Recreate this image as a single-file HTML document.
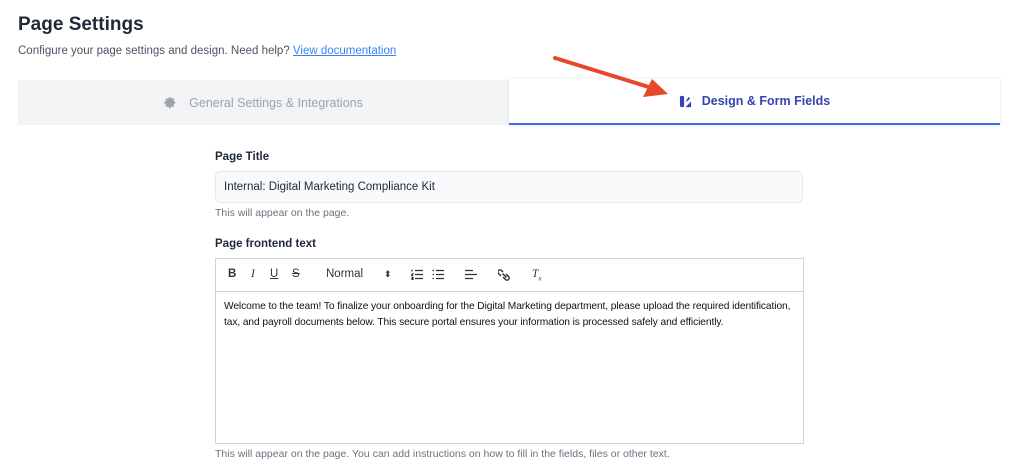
<!DOCTYPE html>
<html><head><style>
body{margin:0;width:1024px;height:472px;background:#fff;font-family:"Liberation Sans",sans-serif;position:relative;overflow:hidden;color:#111827}
.a{position:absolute}
h1{position:absolute;left:18px;top:14px;margin:0;font-size:19px;font-weight:700;color:#1f2937}
.sub{left:18px;top:45px;font-size:11.5px;color:#4b5563}
.sub a{color:#3b82f6;text-decoration:underline}
.tab1{left:18px;top:80px;width:491px;height:45px;background:#f3f4f6;color:#9ca3af;font-size:12.5px;display:flex;align-items:center;justify-content:center}
.tab2{left:509px;top:79px;width:491px;height:44px;background:#fff;box-shadow:0 0 3px rgba(0,0,0,.12);border-bottom:2px solid #4169e1;color:#3545b0;font-size:12.5px;font-weight:700;display:flex;align-items:center;justify-content:center}
.lbl{left:215px;font-size:11.5px;font-weight:700;color:#1f2937}
.help{left:215px;font-size:10.5px;color:#6b7280}
.inp{left:215px;top:171px;width:586px;height:30px;border:1px solid #e5e7eb;border-radius:5px;background:#f9fafb;font-size:11.5px;line-height:30px;text-indent:8px;color:#1f2937}
.ed{left:215px;top:258px;width:587px;height:184px;border:1px solid #d1d5db}
.tb{height:32px;border-bottom:1px solid #d1d5db;font-size:11.5px;color:#333;position:relative}
.tb span{position:absolute;top:9px}
.tb svg{position:absolute;top:10px}
.txt{padding:7px 8px;font-size:10.2px;letter-spacing:-0.08px;line-height:16px;color:#111;white-space:nowrap}
</style></head><body>
<h1>Page Settings</h1>
<div class="a sub">Configure your page settings and design. Need help? <a>View documentation</a></div>
<div class="a tab1"><svg width="13" height="13" viewBox="0 0 24 24" style="margin-right:12px"><path fill="#9ca3af" d="M12 8a4 4 0 100 8 4 4 0 000-8zm9 5.5v-3l-2.5-.6a7 7 0 00-.8-1.9l1.3-2.2-2.1-2.1-2.2 1.3a7 7 0 00-1.9-.8L12.2 2h-3l-.6 2.5a7 7 0 00-1.9.8L4.5 4 2.4 6.1l1.3 2.2a7 7 0 00-.8 1.9L.4 10.8v3l2.5.6c.2.7.4 1.3.8 1.9l-1.3 2.2 2.1 2.1 2.2-1.3c.6.4 1.2.6 1.9.8l.6 2.5h3l.6-2.5c.7-.2 1.3-.4 1.9-.8l2.2 1.3 2.1-2.1-1.3-2.2c.4-.6.6-1.2.8-1.9z"/></svg>General Settings &amp; Integrations</div>
<div class="a tab2"><svg width="13" height="13" viewBox="0 0 14 14" style="margin-right:10px"><rect x="1" y="1" width="4.5" height="12" rx="1.5" fill="#3545b0"/><path d="M7 13l6-6v6z M7 8l3-6 2 2z" fill="#3545b0"/></svg>Design &amp; Form Fields</div>
<svg class="a" style="left:0;top:0" width="1024" height="472"><line x1="555" y1="58" x2="652" y2="88" stroke="#e8472c" stroke-width="4" stroke-linecap="round"/><path d="M668 94L643 97L652 79Z" fill="#e8472c"/></svg>
<div class="a lbl" style="top:151px">Page Title</div>
<div class="a inp">Internal: Digital Marketing Compliance Kit</div>
<div class="a help" style="top:207px">This will appear on the page.</div>
<div class="a lbl" style="top:238px">Page frontend text</div>
<div class="a ed"><div class="tb">
<span style="left:12px;font-weight:700">B</span><span style="left:35px;font-style:italic;font-family:'Liberation Serif'">I</span><span style="left:54px;text-decoration:underline">U</span><span style="left:76px;text-decoration:line-through">S</span>
<span style="left:110px">Normal</span><span style="left:168px;font-size:9px;top:10px">⬍</span>
<svg style="left:195px" width="12" height="11" viewBox="0 0 12 11" stroke="#333" stroke-width="1.2"><path d="M4 1.5h8M4 5.5h8M4 9.5h8M1 0.5v2M0.5 5h1.5l-1.5 1.5h1.5M0.5 8.5h1.5v2h-1.5"/></svg>
<svg style="left:216px" width="12" height="11" viewBox="0 0 12 11" stroke="#333" stroke-width="1.2"><path d="M4 1.5h8M4 5.5h8M4 9.5h8M0.5 1.5h1.5M0.5 5.5h1.5M0.5 9.5h1.5"/></svg>
<svg style="left:249px" width="12" height="11" viewBox="0 0 12 11" stroke="#333" stroke-width="1.2"><path d="M0 1.5h8M0 5.5h12M0 9.5h8"/></svg>
<svg style="left:282px" width="13" height="12" viewBox="0 0 13 12" fill="none" stroke="#333" stroke-width="1.5"><path d="M5 3l-1.5-1.5a2 2 0 00-3 3L3 7M8 5l2.5 2.5a2 2 0 01-3 3L5 8M4.5 4.5l4 4"/></svg>
<span style="left:316px;font-style:italic;font-family:'Liberation Serif'">T<sub style="font-size:7px">x</sub></span>
</div><div class="txt">Welcome to the team! To finalize your onboarding for the Digital Marketing department, please upload the required identification,<br>tax, and payroll documents below. This secure portal ensures your information is processed safely and efficiently.</div></div>
<div class="a help" style="top:448px">This will appear on the page. You can add instructions on how to fill in the fields, files or other text.</div>
</body></html>
